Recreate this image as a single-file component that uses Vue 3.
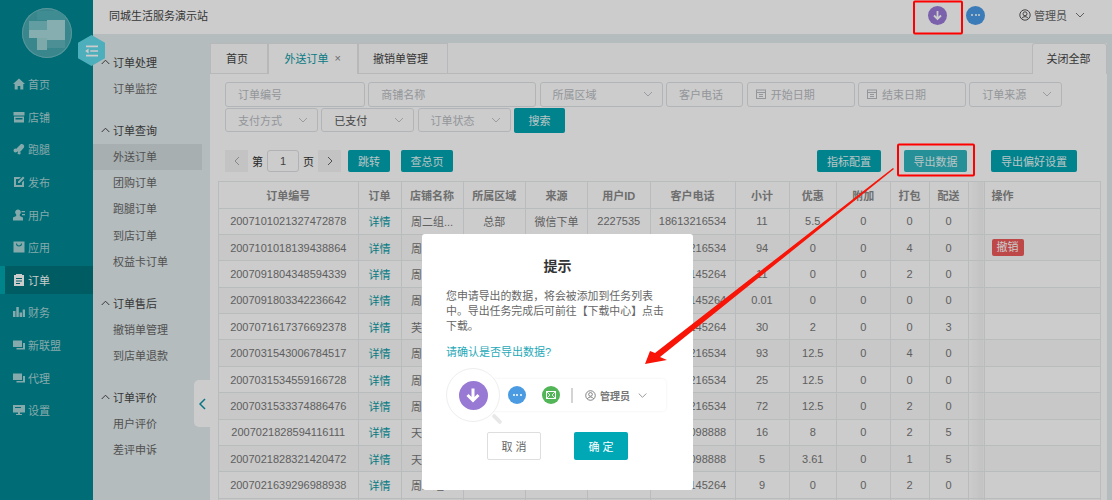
<script setup>
const menus = [
  { name: '首页', icon: 'home' },
  { name: '店铺', icon: 'shop' },
  { name: '跑腿', icon: 'run' },
  { name: '发布', icon: 'post' },
  { name: '用户', icon: 'user' },
  { name: '应用', icon: 'app' },
  { name: '订单', icon: 'order', active: true },
  { name: '财务', icon: 'bars' },
  { name: '新联盟', icon: 'chat' },
  { name: '代理', icon: 'chat' },
  { name: '设置', icon: 'screen' }
]

const groups = [
  { title: '订单处理', items: ['订单监控'] },
  { title: '订单查询', items: ['外送订单', '团购订单', '跑腿订单', '到店订单', '权益卡订单'] },
  { title: '订单售后', items: ['撤销单管理', '到店单退款'] },
  { title: '订单评价', items: ['用户评价', '差评申诉'] }
]

const filters = [
  { label: '订单编号', width: 140 },
  { label: '商铺名称', width: 168 },
  { label: '所属区域', width: 123, type: 'select' },
  { label: '客户电话', width: 77.5 },
  { label: '开始日期', width: 108, type: 'date' },
  { label: '结束日期', width: 108, type: 'date' },
  { label: '订单来源', width: 92.5, type: 'select' },
  { label: '支付方式', width: 93, type: 'select' },
  { label: '已支付', width: 93, type: 'select', filled: true },
  { label: '订单状态', width: 93, type: 'select' }
]

const columns = ['订单编号', '订单', '店铺名称', '所属区域', '来源', '用户ID', '客户电话', '小计', '优惠', '附加', '打包', '配送']
const widths = [139.5, 43, 62, 62.5, 62, 62.5, 85, 54, 47.5, 53.5, 39, 39, 16, 116]

// 弹窗挡住的单元格留空
const rows = [
  ['2007101021327472878', '周二组...', '总部', '微信下单', '2227535', '18613216534', '11', '5.5', '0', '0', '0'],
  ['2007101018139438864', '周二组...', '', '', '', '18613216534', '94', '0', '0', '4', '0', true],
  ['2007091804348594339', '周二组...', '', '', '', '13688145264', '11', '0', '0', '2', '0'],
  ['2007091803342236642', '周二组...', '', '', '', '13688145264', '0.01', '0', '0', '0', '0'],
  ['2007071617376692378', '芙蓉店...', '', '', '', '13688145264', '30', '2', '0', '0', '3'],
  ['2007031543006784517', '周二组...', '', '', '', '18613216534', '93', '12.5', '0', '4', '0'],
  ['2007031534559166728', '周二组...', '', '', '', '18613216534', '25', '12.5', '0', '0', '0'],
  ['2007031533374886476', '周二组...', '', '', '', '18613216534', '72', '12.5', '0', '2', '0'],
  ['2007021828594116111', '天下第...', '', '', '', '15900098888', '16', '8', '0', '2', '5'],
  ['2007021828321420472', '天下第...', '', '', '', '15900098888', '5', '3.61', '0', '1', '5'],
  ['2007021639296988938', '周二组...', '', '', '', '13688145264', '9', '0', '0', '2', '0'],
  ['', '', '', '', '', '', '', '', '', '', '']
]

const pixels = [
  [15, 3, 28, 9, '#4fb0b7'], [7, 13, 18, 9, '#7bc6ca'], [25, 12, 18, 20, '#a8d9db'],
  [7, 22, 18, 8, '#a8d9db'], [15, 30, 10, 12, '#9dd4d6'], [25, 32, 18, 8, '#5fb5bb']
]
</script>

<template>
  <div class="page">
    <aside class="sidebar">
      <div class="logo">
        <div class="logo-circle">
          <i
            v-for="(p, i) in pixels"
            :key="i"
            :style="{ left: p[0] + 'px', top: p[1] + 'px', width: p[2] + 'px', height: p[3] + 'px', background: p[4] }"
          ></i>
        </div>
        <div class="hexagon">
          <svg width="14" height="12" viewBox="0 0 16 14">
            <path d="M1 1.500h14M6 7h9M1 12.500h14" stroke="#fff" stroke-width="2" />
            <path d="M0 7l4-2.800v5.600z" fill="#fff" />
          </svg>
        </div>
      </div>
      <ul class="menu">
        <li v-for="m in menus" :key="m.name" :class="{ active: m.active }">
          <svg class="menu-icon" width="12" height="12" viewBox="0 0 12 12" fill="currentColor">
            <path v-if="m.icon === 'home'" d="M6 .5L0 6h1.700v5.500h3V8h2.600v3.500h3V6H12z" />
            <path v-else-if="m.icon === 'shop'" d="M.5 1h11v3.500H.5zM1 5.500h10v6H1zM2.500 7v1.500h7V7z" fill-rule="evenodd" />
            <path v-else-if="m.icon === 'run'" d="M8 1a2.600 2.600 0 0 1 3 3.500L8 8a2.500 2.500 0 0 1-4-3zM2.500 5.500a2 2 0 1 1 0 4 2 2 0 0 1 0-4zM5 9l3 .5-1 2-2.500-.5z" />
            <path v-else-if="m.icon === 'post'" d="M1 1h7L6 3H3v6h6V6.500l2-2V11H1zM10 .5l1.500 1.500L6.500 7H5V5.500z" />
            <path v-else-if="m.icon === 'user'" d="M5 .5a2.800 2.800 0 0 1 1.800 5V7L10 8.500v3H0v-3L3.200 7V5.500A2.800 2.800 0 0 1 5 .5zM8.500 2H12v1.200H8.500zM9 5h3v1.200H9z" />
            <path v-else-if="m.icon === 'app'" d="M.5.500h11v11H.5zM3 2.500a3 3 0 0 0 6 0H8a2 2 0 0 1-4 0z" fill-rule="evenodd" />
            <path v-else-if="m.icon === 'order'" d="M1 1h2V0h6v1h2v11H1zM3 4v1h6V4zM3 6.500v1h6v-1zM3 9v1h4V9z" fill-rule="evenodd" />
            <path v-else-if="m.icon === 'bars'" d="M0 5h2.500v6H0zM3.300 1h2.500v10H3.300zM6.600 6.500h2.400V11H6.600zM9.700 3.500H12V11H9.700z" />
            <path v-else-if="m.icon === 'chat'" d="M0 1.500h9V8H0zM10 4h2v6.500H3.500V9H10z" />
            <path v-else d="M0 1h12v7.500H7v1.500h2v1H3v-1h2V8.500H0zM2 3v1h6V3z" fill-rule="evenodd" />
          </svg>
          <span>{{ m.name }}</span>
        </li>
      </ul>
    </aside>

    <div class="main">
      <header class="topbar">
        <span class="site">同城生活服务演示站</span>
        <div class="top-right">
          <span class="round purple">
            <svg width="11" height="11" viewBox="0 0 11 11"><path d="M5.500 1v8M2 5.500l3.500 3.500L9 5.500" fill="none" stroke="#fff" stroke-width="1.800" /></svg>
          </span>
          <span class="round blue"><b></b><b></b><b></b></span>
          <span class="account">
            <svg width="12" height="12" viewBox="0 0 12 12" fill="none" stroke="#555" stroke-width="1">
              <circle cx="6" cy="6" r="5.200" />
              <circle cx="6" cy="4.800" r="2" />
              <path d="M2.600 9.700a3.800 3.800 0 0 1 6.800 0" />
            </svg>
            管理员
          </span>
          <svg class="account-arrow" width="10" height="6" viewBox="0 0 10 6"><path d="M1 1l4 4 4-4" fill="none" stroke="#777" /></svg>
        </div>
      </header>

      <div class="body">
        <nav class="subnav">
          <section v-for="g in groups" :key="g.title" class="group">
            <h4>
              <svg width="9" height="6" viewBox="0 0 9 6"><path d="M.7 5l3.800-3.800L8.300 5" fill="none" stroke="#444" /></svg>
              {{ g.title }}
            </h4>
            <a v-for="item in g.items" :key="item" :class="{ current: item === '外送订单' }">{{ item }}</a>
          </section>
          <div class="collapse">
            <svg width="7" height="12" viewBox="0 0 7 12"><path d="M6 1L1 6l5 5" fill="none" stroke="#0a93a3" stroke-width="1.500" /></svg>
          </div>
        </nav>

        <main class="panel">
          <div class="tabs">
            <span class="tab first">首页</span>
            <span class="tab selected">外送订单 <em>×</em></span>
            <span class="tab third">撤销单管理</span>
            <span class="tab close-all">关闭全部</span>
          </div>

          <div class="filters">
            <div
              v-for="f in filters"
              :key="f.label"
              class="field"
              :class="{ filled: f.filled, 'date-field': f.type === 'date' }"
              :style="{ width: f.width + 'px' }"
            >
              <svg v-if="f.type === 'date'" class="calendar" width="10" height="10" viewBox="0 0 10 10" fill="none" stroke="#b8bcc2">
                <rect x=".5" y="1" width="9" height="8.500" />
                <path d="M.5 3.500h9M3 5.500h4M3 7.500h4" />
              </svg>
              <span>{{ f.label }}</span>
              <svg v-if="f.type === 'select'" class="caret" width="10" height="6" viewBox="0 0 10 6">
                <path d="M1 1l4 4 4-4" fill="none" stroke="#c0c4c8" />
              </svg>
            </div>
            <button class="btn search">搜索</button>
          </div>

          <div class="toolbar">
            <span class="pager">
              <svg width="6" height="10" viewBox="0 0 6 10"><path d="M5 1L1 5l4 4" fill="none" stroke="#aaa" /></svg>
            </span>
            <span class="page-label">第</span>
            <span class="page-input">1</span>
            <span class="page-label">页</span>
            <span class="pager">
              <svg width="6" height="10" viewBox="0 0 6 10"><path d="M1 1l4 4-4 4" fill="none" stroke="#666" /></svg>
            </span>
            <button class="btn jump">跳转</button>
            <button class="btn total">查总页</button>
            <span class="spacer"></span>
            <button class="btn metric">指标配置</button>
            <button class="btn export">导出数据</button>
            <button class="btn prefer">导出偏好设置</button>
          </div>

          <table class="orders">
            <colgroup>
              <col v-for="(w, i) in widths" :key="i" :style="{ width: w + 'px' }" />
            </colgroup>
            <thead>
              <tr>
                <th v-for="c in columns" :key="c">{{ c }}</th>
                <th class="shade"></th>
                <th class="op">操作</th>
              </tr>
            </thead>
            <tbody>
              <tr v-for="(r, i) in rows" :key="i" :class="{ even: i % 2 === 1 }">
                <td>{{ r[0] }}</td>
                <td class="link">{{ r[0] ? '详情' : '' }}</td>
                <td v-for="n in 10" :key="n">{{ r[n] }}</td>
                <td class="shade"></td>
                <td class="op"><span v-if="r[11]" class="revoke">撤销</span></td>
              </tr>
            </tbody>
          </table>
        </main>
      </div>
    </div>

    <div class="mask">
      <div class="dialog">
        <h3>提示</h3>
        <p class="message">您申请导出的数据，将会被添加到任务列表中。导出任务完成后可前往【下载中心】点击下载。</p>
        <p class="confirm">请确认是否导出数据?</p>
        <div class="guide">
          <div class="lens">
            <span class="lens-dot">
              <svg width="16" height="16" viewBox="0 0 16 16"><path d="M8 1.500v12M2.500 8L8 13.500 13.500 8" fill="none" stroke="#fff" stroke-width="3" /></svg>
            </span>
            <i class="lens-handle"></i>
          </div>
          <div class="guide-bar">
            <span class="dot blue-dot"><b></b><b></b><b></b></span>
            <span class="dot green-dot">
              <svg width="10" height="8" viewBox="0 0 10 8"><rect x=".5" y=".5" width="9" height="7" fill="none" stroke="#fff" /><path d="M1 1l3 3-3 3M9 1L6 4l3 3" fill="none" stroke="#fff" stroke-width=".8" /></svg>
            </span>
            <i class="sep"></i>
            <svg width="11" height="11" viewBox="0 0 12 12" fill="none" stroke="#777" stroke-width="1">
              <circle cx="6" cy="6" r="5.200" />
              <circle cx="6" cy="4.800" r="2" />
              <path d="M2.600 9.700a3.800 3.800 0 0 1 6.800 0" />
            </svg>
            <span class="guide-name">管理员</span>
            <svg class="guide-arrow" width="9" height="5" viewBox="0 0 9 5"><path d="M.7.500l3.800 3.800L8.300.5" fill="none" stroke="#999" /></svg>
          </div>
        </div>
        <div class="actions">
          <button class="cancel">取 消</button>
          <button class="ok">确 定</button>
        </div>
      </div>
    </div>

    <!-- 截图上的红色标注 -->
    <svg class="notes" width="1112" height="500" viewBox="0 0 1112 500">
      <rect x="914" y="1.500" width="48" height="32" rx="1" fill="none" stroke="#f00" stroke-width="2" />
      <rect x="898" y="144.500" width="76" height="31" rx="1" fill="none" stroke="#f00" stroke-width="2" />
      <polygon points="893,168 894,169 660,357 667,360 645,364 650,351 655,353" fill="#f81407" />
    </svg>
  </div>
</template>

<style scoped>
.page {
  position: relative;
  display: flex;
  width: 1112px;
  height: 500px;
  overflow: hidden;
  background: #e2ebed;
  font-family: "Liberation Sans", "Noto Sans CJK SC", sans-serif;
  font-size: 11px;
  color: #666;
}

.sidebar {
  flex: none;
  width: 93px;
  background: #008893;
  color: #a8d4d8;
}

.logo {
  position: relative;
  height: 68px;
}

.logo-circle {
  position: absolute;
  left: 22px;
  top: 8px;
  width: 50px;
  height: 50px;
  border-radius: 50%;
  overflow: hidden;
  background: #48a8b0;
  box-shadow: inset 0 0 0 1px #6cbdc3;
}

.logo-circle i {
  position: absolute;
}

.hexagon {
  position: absolute;
  left: 78px;
  top: 35px;
  z-index: 2;
  display: flex;
  align-items: center;
  justify-content: center;
  width: 27px;
  height: 31px;
  background: #60dbea;
  clip-path: polygon(50% 0, 100% 25%, 100% 75%, 50% 100%, 0 75%, 0 25%);
}

.menu {
  list-style: none;
  margin: 0;
  padding: 0;
}

.menu li {
  display: flex;
  align-items: center;
  gap: 3px;
  height: 32.600px;
  padding-left: 13px;
}

.menu li.active {
  height: 28px;
  margin: 2.300px 0;
  padding-left: 8px;
  border-left: 5px solid #00a5b0;
  background: #00737c;
  color: #fff;
}

.menu-icon {
  flex: none;
}

.main {
  flex: 1;
  display: flex;
  flex-direction: column;
  min-width: 0;
}

.topbar {
  flex: none;
  display: flex;
  align-items: center;
  justify-content: space-between;
  box-sizing: border-box;
  height: 34px;
  padding: 0 0 4px 16px;
  background: #fff;
}

.site {
  color: #444;
}

.top-right {
  display: flex;
  align-items: center;
  margin-right: 27px;
}

.round {
  display: flex;
  align-items: center;
  justify-content: center;
  gap: 1.500px;
  width: 19px;
  height: 19px;
  border-radius: 50%;
}

.purple {
  background: #9a7ad8;
}

.blue {
  margin-left: 19px;
  background: #4a9ce6;
}

.round b,
.dot b {
  width: 2px;
  height: 2px;
  border-radius: 50%;
  background: #fff;
}

.account {
  display: flex;
  align-items: center;
  gap: 3px;
  margin-left: 34px;
  color: #666;
}

.account-arrow {
  margin-left: 8px;
}

.body {
  flex: 1;
  display: flex;
  min-height: 0;
}

.subnav {
  position: relative;
  flex: none;
  width: 117px;
  padding-top: 14px;
  box-sizing: border-box;
}

.group {
  margin-bottom: 13.300px;
}

.group h4 {
  display: flex;
  align-items: center;
  gap: 3px;
  height: 28px;
  margin: 0;
  padding-left: 8px;
  font-size: 11px;
  font-weight: 400;
  color: #444;
}

.group a {
  display: block;
  height: 26.400px;
  width: 89px;
  padding-left: 20px;
  line-height: 26.400px;
  color: #666;
}

.group a.current {
  background: #d2dbdd;
}

.collapse {
  position: absolute;
  right: 0;
  top: 346px;
  display: flex;
  align-items: center;
  justify-content: center;
  width: 16px;
  height: 47px;
  border-radius: 5px 0 0 5px;
  background: #fff;
}

.panel {
  flex: none;
  width: 897px;
  margin-top: 9px;
  background: #fff;
  overflow: hidden;
}

.tabs {
  display: flex;
  height: 31px;
  box-sizing: border-box;
  border-bottom: 1px solid #e4e7e8;
  background: #fdfdfd;
}

.tab {
  display: flex;
  align-items: center;
  justify-content: center;
  box-sizing: border-box;
  height: 31px;
  padding-bottom: 2px;
  border: 1px solid #e4e7e8;
  border-bottom: 0;
  color: #444;
}

.first {
  width: 58px;
  padding-right: 4px;
}

.selected {
  width: 89.500px;
  gap: 6px;
  background: #fff;
  color: #0a9aa5;
}

.selected em {
  font-style: normal;
  color: #888;
}

.third {
  width: 90px;
  padding-right: 4px;
}

.close-all {
  width: 75px;
  margin-left: auto;
  padding-right: 2px;
  background: #fff;
  border-radius: 3px 3px 0 0;
}

.filters {
  display: flex;
  flex-wrap: wrap;
  gap: 1px 3.300px;
  width: 860px;
  margin: 8px 0 0 15px;
}

.field {
  display: flex;
  align-items: center;
  box-sizing: border-box;
  height: 24.500px;
  padding: 0 9px 0 12px;
  border: 1px solid #dfe3e6;
  border-radius: 3px;
  background: #fff;
  color: #b8bcc2;
}

.date-field {
  padding-left: 8px;
}

.calendar {
  margin-right: 5px;
}

.caret {
  margin-left: auto;
}

.filled {
  color: #555;
}

.btn {
  box-sizing: border-box;
  border: 0;
  border-radius: 2px;
  background: #00a4b0;
  color: #e6f6f7;
  font: inherit;
  padding: 0;
}

.search {
  width: 51px;
  height: 25px;
}

.toolbar {
  display: flex;
  align-items: center;
  height: 22px;
  margin: 17px 0 0 15px;
}

.pager {
  display: flex;
  align-items: center;
  justify-content: center;
  width: 23px;
  height: 22px;
  background: #f4f4f4;
}

.page-label {
  margin: 0 4px;
  color: #333;
}

.page-input {
  box-sizing: border-box;
  width: 32px;
  height: 22px;
  border: 1px solid #dcdfe3;
  border-radius: 3px;
  line-height: 20px;
  text-align: center;
  color: #555;
}

.toolbar .btn {
  height: 22px;
}

.jump {
  width: 42px;
  margin-left: 7px;
}

.total {
  width: 52px;
  margin-left: 11px;
}

.spacer {
  flex: 1;
}

.metric {
  width: 64px;
}

.export {
  width: 63px;
  margin-left: 23px;
  background: #2fb4bd;
}

.prefer {
  width: 86px;
  margin-left: 24px;
  margin-right: 30px;
}

.orders {
  table-layout: fixed;
  width: 881px;
  margin: 9px 0 0 8px;
  border-collapse: collapse;
  color: #777;
}

.orders th,
.orders td {
  height: 26.400px;
  padding: 0;
  border: 1px solid #e6ebeb;
  box-sizing: border-box;
  text-align: center;
  font-size: 11px;
  white-space: nowrap;
  overflow: hidden;
}

.orders th {
  height: 27px;
  color: #8a8a8a;
  font-weight: 700;
}

.orders tr.even td {
  background: #fafafa;
}

.orders .link {
  color: #0a9aa5;
}

.orders .shade {
  background: linear-gradient(to right, #ffffff, #f3f3f3) !important;
  border-right: 0;
}

.orders .op {
  padding-left: 7px;
  text-align: left;
  background: #fff;
}

.revoke {
  display: inline-block;
  width: 32px;
  height: 17px;
  border-radius: 2px;
  background: #ee5a5a;
  color: #fff;
  font-size: 11px;
  line-height: 17px;
  text-align: center;
  vertical-align: middle;
}

.mask {
  position: absolute;
  inset: 0;
  z-index: 5;
  background: rgba(0, 0, 0, 0.2);
}

.dialog {
  position: absolute;
  left: 422px;
  top: 234px;
  width: 271px;
  height: 256px;
  box-sizing: border-box;
  padding: 22px 24px 0;
  border-radius: 3px;
  background: #fff;
}

.dialog h3 {
  margin: 0;
  font-size: 14px;
  line-height: 20px;
  text-align: center;
  color: #333;
}

.message {
  margin: 13px 0 0;
  font-size: 10.900px;
  line-height: 15px;
  color: #666;
}

.confirm {
  margin: 11px 0 0;
  font-size: 11px;
  line-height: 14px;
  color: #1fa9b8;
}

.guide {
  position: relative;
  height: 62px;
  margin-top: 9px;
}

.lens {
  position: absolute;
  left: 0;
  top: 0;
  z-index: 1;
  display: flex;
  align-items: center;
  justify-content: center;
  box-sizing: border-box;
  width: 54px;
  height: 54px;
  border: 1.500px solid #eeeeee;
  border-radius: 50%;
  background: #fff;
}

.lens-dot {
  display: flex;
  align-items: center;
  justify-content: center;
  width: 29px;
  height: 29px;
  border-radius: 50%;
  background: #9879d3;
}

.lens-handle {
  position: absolute;
  left: 44px;
  top: 48px;
  width: 12px;
  height: 4px;
  border-radius: 2px;
  background: #e8e8e8;
  transform: rotate(45deg);
}

.guide-bar {
  position: absolute;
  left: 40px;
  top: 11px;
  display: flex;
  align-items: center;
  box-sizing: border-box;
  width: 180px;
  height: 32px;
  padding-left: 22px;
  border-radius: 4px;
  box-shadow: 0 0 3px #eeeeee;
}

.dot {
  display: flex;
  align-items: center;
  justify-content: center;
  gap: 1.500px;
  width: 18px;
  height: 18px;
  border-radius: 50%;
}

.blue-dot {
  background: #4a9be2;
}

.green-dot {
  margin-left: 16px;
  background: #52b557;
}

.sep {
  width: 2px;
  height: 15px;
  margin: 0 12px 0 11px;
  background: #d4d4d4;
}

.guide-name {
  margin-left: 4px;
  font-size: 10px;
  font-weight: 700;
  color: #777;
}

.guide-arrow {
  margin-left: 8px;
}

.actions {
  display: flex;
  gap: 33px;
  margin: 2px 0 0 41px;
}

.actions button {
  box-sizing: border-box;
  width: 54px;
  height: 28px;
  border-radius: 2px;
  font-family: inherit;
  font-size: 11px;
}

.cancel {
  border: 1px solid #dedede;
  background: #fff;
  color: #666;
}

.ok {
  border: 0;
  background: #00a7b5;
  color: #fff;
}

.notes {
  position: absolute;
  left: 0;
  top: 0;
  z-index: 6;
  pointer-events: none;
}
</style>

<style>
html, body {
  margin: 0;
  overflow: hidden;
}
</style>
